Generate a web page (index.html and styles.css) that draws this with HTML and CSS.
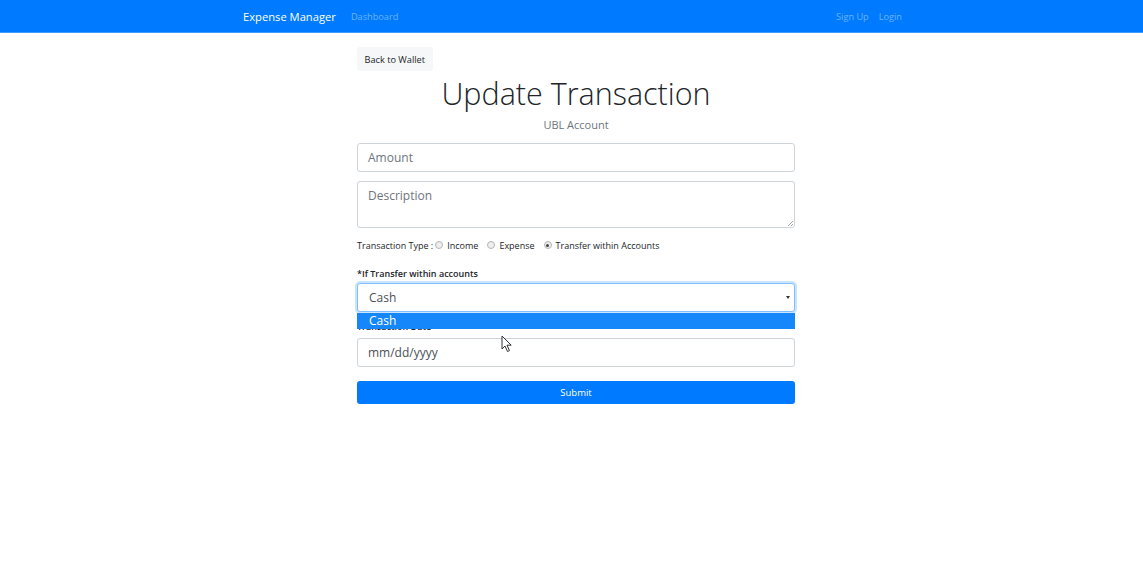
FILE: index.html
```html
<!DOCTYPE html>
<html lang="en">
<head>
<meta charset="utf-8">
<title>Update Transaction</title>
<link rel="stylesheet" href="styles.css">
</head>
<body>
<nav class="navbar">
  <div class="nav-inner">
    <a class="brand">Expense Manager</a>
    <a class="nav-link">Dashboard</a>
    <div class="nav-spacer"></div>
    <a class="nav-link">Sign Up</a>
    <a class="nav-link">Login</a>
  </div>
</nav>
<main class="page">
  <button class="btn-light">Back to Wallet</button>
  <h1 class="title">Update Transaction</h1>
  <p class="subtitle">UBL Account</p>
  <div class="field input">Amount</div>
  <div class="field textarea">Description<span class="grip"></span></div>
  <div class="type-row">
    <span class="type-label">Transaction Type :</span>
    <span class="radio"></span><span class="radio-text">Income</span>
    <span class="radio"></span><span class="radio-text">Expense</span>
    <span class="radio checked"></span><span class="radio-text">Transfer within Accounts</span>
  </div>
  <div class="group">
    <div class="label-bold">*If Transfer within accounts</div>
    <div class="select-wrap">
      <div class="field select">Cash<span class="caret"></span></div>
      <div class="dropdown"><div class="option">Cash</div></div>
    </div>
    <div class="label-bold date-label">Transaction Date</div>
    <div class="field input date">mm/dd/yyyy</div>
  </div>
  <button class="btn-primary">Submit</button>
  <svg class="cursor" width="12" height="18" viewBox="0 0 12 18"><path d="M1 1 L1 14 L4 11 L6.5 16.5 L8.5 15.6 L6 10.2 L10.2 10.2 Z" fill="#fff" stroke="#333" stroke-width="1" stroke-linejoin="round"/></svg>
</main>
</body>
</html>
```
FILE: styles.css
```css
* { box-sizing: border-box; }
html, body { margin: 0; padding: 0; background: #fff; }
body { font-family: "Open Sans", "Noto Sans", sans-serif; color: #212529; }

.navbar { height: 33px; background: #007bff; border-bottom: 1px solid #3d9bff; }
.nav-inner { width: 661px; margin: 0 auto; padding-left: 2px; height: 32px; display: flex; align-items: center; }
.brand { color: #fff; font-size: 11.2px; margin-right: 15px; }
.nav-link { color: #6bb2ff; font-size: 9.2px; margin-right: 10px; }
.nav-link:last-child { margin-right: 0; }
.nav-spacer { flex: 1; }

.page { width: 438px; margin: 0 auto; padding-left: 9px; box-sizing: content-box; position: relative; display: flex; flex-direction: column; }

.btn-light { align-self: flex-start; margin-top: 14px; height: 24px; padding: 0 7.5px; border: 0; border-radius: 3px; background: #f6f7f8; color: #212529; font-family: inherit; font-size: 9.2px; }
.title { margin: 2px 0 0; text-align: center; font-size: 30.5px; font-weight: 300; line-height: 40px; color: #212529; }
.subtitle { margin: 4px 0 0; text-align: center; font-size: 11px; line-height: 16px; color: #6c757d; }

.field { border: 1px solid #ced4da; border-radius: 3px; background: #fff; color: #6c757d; font-size: 12px; padding: 0 10px; }
.input { height: 29px; line-height: 27px; margin-top: 10px; }
.textarea { height: 47px; line-height: 16px; padding-top: 6px; margin-top: 9px; position: relative; }
.grip { position: absolute; right: 1px; bottom: 1px; width: 5px; height: 5px; background: linear-gradient(135deg, transparent 45%, #aaa 45%, #aaa 55%, transparent 55%, transparent 75%, #aaa 75%, #aaa 85%, transparent 85%); }

.type-row { margin-top: 11px; display: flex; align-items: center; font-size: 9px; color: #212529; height: 12px; }
.type-label { margin-right: 2px; }
.radio { width: 8px; height: 8px; border-radius: 50%; border: 1px solid #b5b5b5; background: #eee; margin-right: 4px; position: relative; }
.radio.checked::after { content: ""; position: absolute; left: 1.5px; top: 1.5px; width: 3px; height: 3px; border-radius: 50%; background: #444; }
.radio-text { margin-right: 9px; }

.group { margin-top: 17px; }
.label-bold { font-size: 9px; font-weight: 600; line-height: 12px; color: #212529; }
.select-wrap { position: relative; margin-top: 3px; }
.select { height: 29px; line-height: 27px; padding-left: 11px; color: #495057; border-color: #80bdff; box-shadow: 0 0 0 2px rgba(0,123,255,.2); position: relative; }
.caret { position: absolute; right: 4px; top: 12px; width: 0; height: 0; border-left: 2.5px solid transparent; border-right: 2.5px solid transparent; border-top: 3.5px solid #333; }
.dropdown { position: absolute; left: 0; right: 0; top: 30px; background: #fff; z-index: 2; }
.option { height: 16px; line-height: 16px; background: #1587fb; color: #fff; font-size: 12px; padding-left: 12px; }
.date-label { margin-top: 9px; height: 12px; }
.date { margin-top: 5px; color: #495057; }

.btn-primary { margin-top: 14px; height: 23px; border: 0; border-radius: 3px; background: #007bff; color: #fff; font-family: inherit; font-size: 9.5px; }

.cursor { position: absolute; left: 153px; top: 302px; z-index: 3; }
```
